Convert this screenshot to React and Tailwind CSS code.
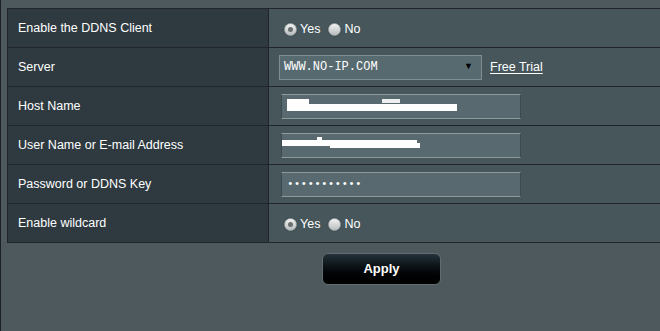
import React from 'react';

const rows = [
  { label: 'Enable the DDNS Client', kind: 'radio' },
  { label: 'Server', kind: 'server' },
  { label: 'Host Name', kind: 'host' },
  { label: 'User Name or E-mail Address', kind: 'user' },
  { label: 'Password or DDNS Key', kind: 'password' },
  { label: 'Enable wildcard', kind: 'radio' },
];

const Radio = ({ checked }) => (
  <span className="inline-flex h-[13px] w-[13px] items-center justify-center rounded-full border border-[#9aa3a5] bg-gradient-to-b from-[#f2f2f2] to-[#b9bdbe] shadow-[0_0_1px_rgba(0,0,0,0.6)]">
    {checked && <span className="h-[5px] w-[5px] rounded-full bg-[#6b6f70]" />}
  </span>
);

const RadioPair = () => (
  <div className="flex items-center pl-[15px] pt-[2px] text-[12.5px] text-white">
    <Radio checked />
    <span className="ml-[3px] mr-[8px]">Yes</span>
    <Radio />
    <span className="ml-[3px]">No</span>
  </div>
);

const TextBox = ({ children }) => (
  <div className="relative ml-[12px] h-[25px] w-[240px] border border-[#3c4a4f] border-t-[#8c9a9b] border-b-[#8c9a9b] bg-[#586a70]">
    {children}
  </div>
);

const Cell = ({ kind }) => {
  if (kind === 'radio') return <RadioPair />;
  if (kind === 'server') {
    return (
      <div className="flex items-center">
        <div className="ml-[10px] flex h-[25px] w-[203px] items-center justify-between border border-[#7f8e90] bg-[#576a70] pl-[4px] pr-[8px]">
          <span className="font-['Liberation_Mono',monospace] text-[12px] text-white">WWW.NO-IP.COM</span>
          <span className="text-[9px] text-black">▼</span>
        </div>
        <span className="ml-[8px] text-[12.5px] text-white underline underline-offset-2">Free Trial</span>
      </div>
    );
  }
  if (kind === 'host') {
    return (
      <TextBox>
        <div className="absolute left-[5px] top-[4px] h-[7px] w-[22px] bg-white" />
        <div className="absolute left-[5px] top-[9px] h-[7px] w-[170px] bg-white" />
        <div className="absolute left-[100px] top-[4px] h-[4px] w-[18px] bg-[#eef0f0]" />
      </TextBox>
    );
  }
  if (kind === 'user') {
    return (
      <TextBox>
        <div className="absolute left-0 top-[6px] h-[6px] w-[135px] bg-white" />
        <div className="absolute left-[48px] top-[9px] h-[5px] w-[90px] bg-white" />
        <div className="absolute left-[35px] top-[3px] h-[4px] w-[5px] bg-white" />
      </TextBox>
    );
  }
  return (
    <TextBox>
      <span className="absolute left-[5px] top-[3px] font-['Liberation_Mono',monospace] text-[11px] tracking-[0.2px] text-white">
        •••••••••••
      </span>
    </TextBox>
  );
};

export default function App() {
  return (
    <div className="h-[331px] w-[660px] overflow-hidden border-l border-[#1b2123] bg-[#4e595d] font-['Liberation_Sans',Arial,sans-serif]">
      <div className="ml-[6px] mt-[8px] w-[700px] border-l border-t border-[#1f2528]">
        {rows.map((r, i) => (
          <div key={i} className="flex h-[39px] border-b border-[#1f2528]">
            <div className="flex w-[261px] items-center border-r border-[#1f2528] bg-[#2e3a3f] pl-[10px] text-[12.5px] text-white">
              {r.label}
            </div>
            <div className="flex flex-1 items-center bg-[#46565b]">
              <Cell kind={r.kind} />
            </div>
          </div>
        ))}
      </div>
      <div className="mt-[10px] flex pl-[321px]">
        <button className="h-[32px] w-[119px] rounded-[6px] border border-[#5f6c70] bg-gradient-to-b from-[#24323a] to-[#000000] text-[13px] font-bold text-white">
          Apply
        </button>
      </div>
    </div>
  );
}
